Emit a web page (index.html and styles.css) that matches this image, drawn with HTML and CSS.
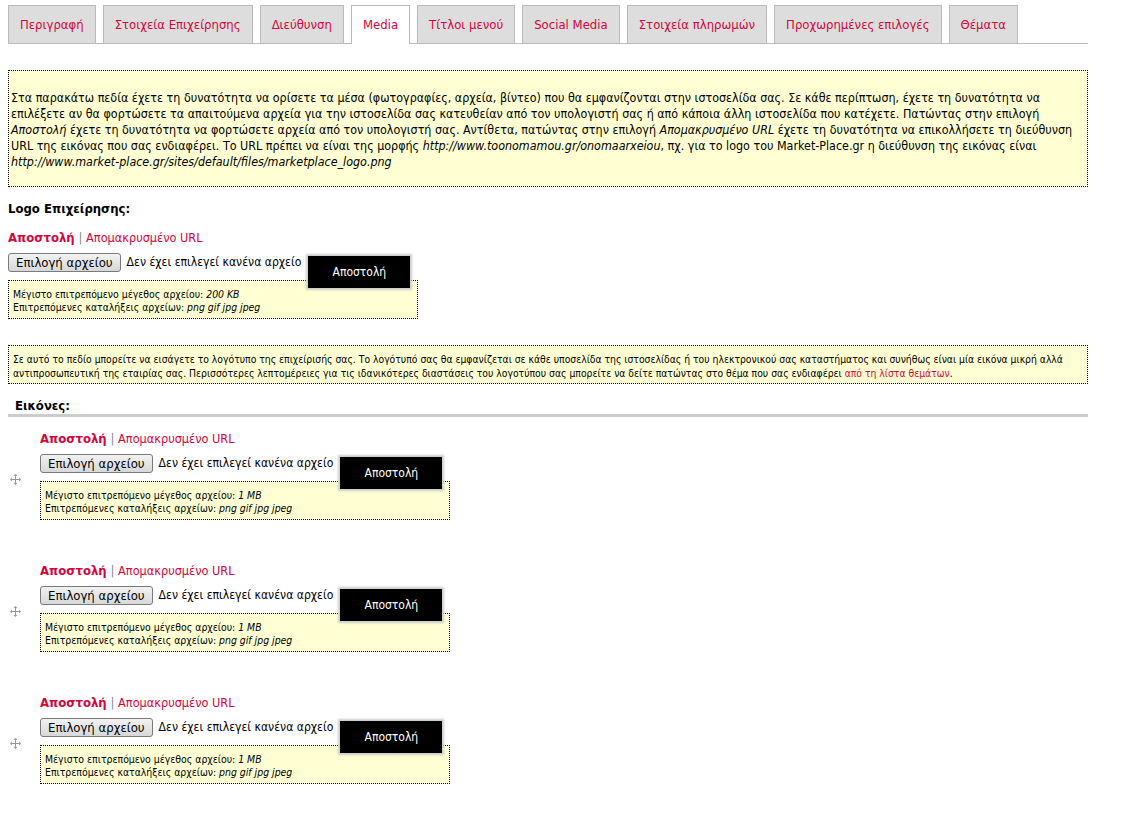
FILE: index.html
```html
<!DOCTYPE html>
<html lang="el">
<head>
<meta charset="utf-8">
<title>Media</title>
<link rel="stylesheet" href="styles.css">
</head>
<body>
<div class="page">
  <ul class="tabs">
    <li class="tab">Περιγραφή</li>
    <li class="tab">Στοιχεία Επιχείρησης</li>
    <li class="tab">Διεύθυνση</li>
    <li class="tab active">Media</li>
    <li class="tab">Τίτλοι μενού</li>
    <li class="tab">Social Media</li>
    <li class="tab">Στοιχεία πληρωμών</li>
    <li class="tab">Προχωρημένες επιλογές</li>
    <li class="tab">Θέματα</li>
  </ul>

  <div class="note note-big">
    <p>Στα παρακάτω πεδία έχετε τη δυνατότητα να ορίσετε τα μέσα (φωτογραφίες, αρχεία, βίντεο) που θα εμφανίζονται στην ιστοσελίδα σας. Σε κάθε περίπτωση, έχετε τη δυνατότητα να επιλέξετε αν θα φορτώσετε τα απαιτούμενα αρχεία για την ιστοσελίδα σας κατευθείαν από τον υπολογιστή σας ή από κάποια άλλη ιστοσελίδα που κατέχετε. Πατώντας στην επιλογή <em>Αποστολή</em> έχετε τη δυνατότητα να φορτώσετε αρχεία από τον υπολογιστή σας. Αντίθετα, πατώντας στην επιλογή <em>Απομακρυσμένο URL</em> έχετε τη δυνατότητα να επικολλήσετε τη διεύθυνση URL της εικόνας που σας ενδιαφέρει. Το URL πρέπει να είναι της μορφής <em>http://www.toonomamou.gr/onomaarxeiou</em>, πχ. για το logo του Market-Place.gr η διεύθυνση της εικόνας είναι <em class="nowrap">http://www.market-place.gr/sites/default/files/marketplace_logo.png</em></p>
  </div>

  <h3 class="label">Logo Επιχείρησης:</h3>
  <div class="upload">
    <div class="switch"><span class="sw-on">Αποστολή</span> <span class="sep">|</span> <span class="sw-off">Απομακρυσμένο URL</span></div>
    <div class="file-row">
      <span class="choose">Επιλογή αρχείου</span>
      <span class="nofile">Δεν έχει επιλεγεί κανένα αρχείο</span>
      <span class="send">Αποστολή</span>
    </div>
    <div class="limits">
      <div>Μέγιστο επιτρεπόμενο μέγεθος αρχείου: <em>200 KB</em></div>
      <div>Επιτρεπόμενες καταλήξεις αρχείων: <em>png gif jpg jpeg</em></div>
    </div>
  </div>

  <div class="note note-small">
    <p>Σε αυτό το πεδίο μπορείτε να εισάγετε το λογότυπο της επιχείρισής σας. Το λογότυπό σας θα εμφανίζεται σε κάθε υποσελίδα της ιστοσελίδας ή του ηλεκτρονικού σας καταστήματος και συνήθως είναι μία εικόνα μικρή αλλά αντιπροσωπευτική της εταιρίας σας. Περισσότερες λεπτομέρειες για τις ιδανικότερες διαστάσεις του λογοτύπου σας μπορείτε να δείτε πατώντας στο θέμα που σας ενδιαφέρει <a class="link">από τη λίστα θεμάτων</a>.</p>
  </div>

  <h3 class="label label-images">Εικόνες:</h3>
  <div class="images">
    <div class="image-item">
      <span class="drag"><svg width="11" height="11" viewBox="0 0 11 11"><g fill="#999"><rect x="5" y="2" width="1" height="7"/><rect x="2" y="5" width="7" height="1"/><path d="M5.5 0 L7.5 2 L3.5 2 Z"/><path d="M5.5 11 L7.5 9 L3.5 9 Z"/><path d="M0 5.5 L2 3.5 L2 7.5 Z"/><path d="M11 5.5 L9 3.5 L9 7.5 Z"/></g></svg></span>
      <div class="upload">
        <div class="switch"><span class="sw-on">Αποστολή</span> <span class="sep">|</span> <span class="sw-off">Απομακρυσμένο URL</span></div>
        <div class="file-row">
          <span class="choose">Επιλογή αρχείου</span>
          <span class="nofile">Δεν έχει επιλεγεί κανένα αρχείο</span>
          <span class="send">Αποστολή</span>
        </div>
        <div class="limits">
          <div>Μέγιστο επιτρεπόμενο μέγεθος αρχείου: <em>1 MB</em></div>
          <div>Επιτρεπόμενες καταλήξεις αρχείων: <em>png gif jpg jpeg</em></div>
        </div>
      </div>
    </div>
    <div class="image-item">
      <span class="drag"><svg width="11" height="11" viewBox="0 0 11 11"><g fill="#999"><rect x="5" y="2" width="1" height="7"/><rect x="2" y="5" width="7" height="1"/><path d="M5.5 0 L7.5 2 L3.5 2 Z"/><path d="M5.5 11 L7.5 9 L3.5 9 Z"/><path d="M0 5.5 L2 3.5 L2 7.5 Z"/><path d="M11 5.5 L9 3.5 L9 7.5 Z"/></g></svg></span>
      <div class="upload">
        <div class="switch"><span class="sw-on">Αποστολή</span> <span class="sep">|</span> <span class="sw-off">Απομακρυσμένο URL</span></div>
        <div class="file-row">
          <span class="choose">Επιλογή αρχείου</span>
          <span class="nofile">Δεν έχει επιλεγεί κανένα αρχείο</span>
          <span class="send">Αποστολή</span>
        </div>
        <div class="limits">
          <div>Μέγιστο επιτρεπόμενο μέγεθος αρχείου: <em>1 MB</em></div>
          <div>Επιτρεπόμενες καταλήξεις αρχείων: <em>png gif jpg jpeg</em></div>
        </div>
      </div>
    </div>
    <div class="image-item">
      <span class="drag"><svg width="11" height="11" viewBox="0 0 11 11"><g fill="#999"><rect x="5" y="2" width="1" height="7"/><rect x="2" y="5" width="7" height="1"/><path d="M5.5 0 L7.5 2 L3.5 2 Z"/><path d="M5.5 11 L7.5 9 L3.5 9 Z"/><path d="M0 5.5 L2 3.5 L2 7.5 Z"/><path d="M11 5.5 L9 3.5 L9 7.5 Z"/></g></svg></span>
      <div class="upload">
        <div class="switch"><span class="sw-on">Αποστολή</span> <span class="sep">|</span> <span class="sw-off">Απομακρυσμένο URL</span></div>
        <div class="file-row">
          <span class="choose">Επιλογή αρχείου</span>
          <span class="nofile">Δεν έχει επιλεγεί κανένα αρχείο</span>
          <span class="send">Αποστολή</span>
        </div>
        <div class="limits">
          <div>Μέγιστο επιτρεπόμενο μέγεθος αρχείου: <em>1 MB</em></div>
          <div>Επιτρεπόμενες καταλήξεις αρχείων: <em>png gif jpg jpeg</em></div>
        </div>
      </div>
    </div>
  </div>
</div>
</body>
</html>
```
FILE: styles.css
```css
html, body {
  margin: 0;
  padding: 0;
  background: #fff;
}
body {
  font-family: "DejaVu Sans Condensed", "DejaVu Sans", sans-serif;
  font-size: 12px;
  color: #000;
}
.page {
  width: 1080px;
  padding: 5px 0 0 8px;
}
.tabs {
  display: flex;
  gap: 7px;
  list-style: none;
  margin: 0;
  padding: 0;
  border-bottom: 1px solid #bbb;
  height: 38px;
}
.tab {
  flex: none;
  white-space: nowrap;
  background: #ddd;
  border: 1px solid #bbb;
  border-bottom: none;
  color: #d3053c;
  font-size: 13px;
  line-height: 37px;
  padding: 0 11px;
}
.tab.active {
  background: #fff;
  height: 38px;
}
.note {
  background: #ffffd3;
  border: 1px dotted #000;
}
.note p { margin: 0; }
.nowrap { white-space: nowrap; }
.note-big {
  margin-top: 26px;
  padding: 19px 2px 16px;
  font-size: 12.4px;
  line-height: 16px;
}
.note-small {
  margin-top: 26px;
  padding: 6px 4px 3px;
  font-size: 10.3px;
  line-height: 14px;
}
.link { color: #d3053c; }
.label {
  font-size: 13px;
  font-weight: bold;
  margin: 14px 0 0;
  line-height: 16px;
}
.label-images {
  margin-top: 14px;
  padding-left: 7px;
  padding-bottom: 0;
  border-bottom: 3px solid #ccc;
}
.upload {
  display: inline-block;
}
.switch {
  margin-top: 13px;
  font-size: 13px;
  line-height: 16px;
}
.sw-on { color: #d3053c; font-weight: bold; }
.sep { color: #888; }
.sw-off { color: #d3053c; font-size: 12.6px; }
.file-row {
  display: flex;
  align-items: flex-start;
  margin-top: 7px;
  height: 27px;
}
.choose {
  font-size: 13px;
  line-height: 17px;
  padding: 0 7px;
  border: 1px solid #7a7a7a;
  border-radius: 3px;
  background: linear-gradient(#f2f2f2, #d8d8d8);
  white-space: nowrap;
}
.nofile {
  font-size: 12.1px;
  line-height: 19px;
  margin-left: 6px;
  white-space: nowrap;
}
.send {
  position: relative;
  z-index: 1;
  margin-left: 7px;
  margin-top: 3px;
  flex: none;
  width: 102px;
  height: 32px;
  line-height: 32px;
  text-align: center;
  background: #000;
  color: #fff;
  font-size: 12px;
  box-shadow: 0 0 2px 2px #ccc;
}
.limits {
  background: #ffffd3;
  border: 1px dotted #000;
  font-size: 10.4px;
  line-height: 13px;
  padding: 7px 4px 4px;
  margin-right: -8px;
}
.images {
  padding-top: 1px;
}
.image-item {
  display: flex;
  align-items: flex-start;
  height: 132px;
}
.drag {
  width: 32px;
  padding: 56px 0 0 2px;
  box-sizing: border-box;
}
```
